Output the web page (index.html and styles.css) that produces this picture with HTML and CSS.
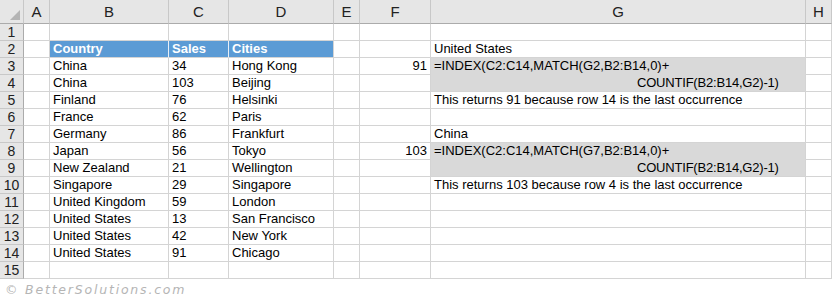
FILE: index.html
```html
<!DOCTYPE html>
<html>
<head>
<meta charset="utf-8">
<link rel="stylesheet" href="styles.css">
</head>
<body>
<div class="sheet">
  <div class="hd corner"><span class="tri"></span></div>
  <div class="hd col">A</div><div class="hd col">B</div><div class="hd col">C</div><div class="hd col">D</div><div class="hd col">E</div><div class="hd col">F</div><div class="hd col">G</div><div class="hd col">H</div>

  <div class="hd row">1</div><div class="c"></div><div class="c"></div><div class="c"></div><div class="c"></div><div class="c"></div><div class="c"></div><div class="c"></div><div class="c"></div>

  <div class="hd row">2</div><div class="c"></div><div class="c th">Country</div><div class="c th">Sales</div><div class="c th last">Cities</div><div class="c"></div><div class="c"></div><div class="c">United States</div><div class="c"></div>

  <div class="hd row">3</div><div class="c"></div><div class="c">China</div><div class="c">34</div><div class="c">Hong Kong</div><div class="c"></div><div class="c num">91</div><div class="c grey top">=INDEX(C2:C14,MATCH(G2,B2:B14,0)+</div><div class="c"></div>

  <div class="hd row">4</div><div class="c"></div><div class="c">China</div><div class="c">103</div><div class="c">Beijing</div><div class="c"></div><div class="c"></div><div class="c grey"><span class="cont">COUNTIF(B2:B14,G2)-1)</span></div><div class="c"></div>

  <div class="hd row">5</div><div class="c"></div><div class="c">Finland</div><div class="c">76</div><div class="c">Helsinki</div><div class="c"></div><div class="c"></div><div class="c">This returns 91 because row 14 is the last occurrence</div><div class="c"></div>

  <div class="hd row">6</div><div class="c"></div><div class="c">France</div><div class="c">62</div><div class="c">Paris</div><div class="c"></div><div class="c"></div><div class="c"></div><div class="c"></div>

  <div class="hd row">7</div><div class="c"></div><div class="c">Germany</div><div class="c">86</div><div class="c">Frankfurt</div><div class="c"></div><div class="c"></div><div class="c">China</div><div class="c"></div>

  <div class="hd row">8</div><div class="c"></div><div class="c">Japan</div><div class="c">56</div><div class="c">Tokyo</div><div class="c"></div><div class="c num">103</div><div class="c grey top">=INDEX(C2:C14,MATCH(G7,B2:B14,0)+</div><div class="c"></div>

  <div class="hd row">9</div><div class="c"></div><div class="c">New Zealand</div><div class="c">21</div><div class="c">Wellington</div><div class="c"></div><div class="c"></div><div class="c grey"><span class="cont">COUNTIF(B2:B14,G2)-1)</span></div><div class="c"></div>

  <div class="hd row">10</div><div class="c"></div><div class="c">Singapore</div><div class="c">29</div><div class="c">Singapore</div><div class="c"></div><div class="c"></div><div class="c">This returns 103 because row 4 is the last occurrence</div><div class="c"></div>

  <div class="hd row">11</div><div class="c"></div><div class="c">United Kingdom</div><div class="c">59</div><div class="c">London</div><div class="c"></div><div class="c"></div><div class="c"></div><div class="c"></div>

  <div class="hd row">12</div><div class="c"></div><div class="c">United States</div><div class="c">13</div><div class="c">San Francisco</div><div class="c"></div><div class="c"></div><div class="c"></div><div class="c"></div>

  <div class="hd row">13</div><div class="c"></div><div class="c">United States</div><div class="c">42</div><div class="c">New York</div><div class="c"></div><div class="c"></div><div class="c"></div><div class="c"></div>

  <div class="hd row">14</div><div class="c"></div><div class="c">United States</div><div class="c">91</div><div class="c">Chicago</div><div class="c"></div><div class="c"></div><div class="c"></div><div class="c"></div>

  <div class="hd row">15</div><div class="c"></div><div class="c"></div><div class="c"></div><div class="c"></div><div class="c"></div><div class="c"></div><div class="c"></div><div class="c"></div>
</div>
<div class="mark">© BetterSolutions.com</div>
</body>
</html>
```
FILE: styles.css
```css
html, body {
  margin: 0;
  padding: 0;
  background: #ffffff;
}
body {
  width: 832px;
  height: 300px;
  overflow: hidden;
  font-family: "Liberation Sans", Arial, sans-serif;
  font-size: 13px;
  color: #000;
}
.sheet {
  display: grid;
  grid-template-columns: 24px 26px 119px 60px 105px 26px 71px 375px 26px;
  grid-template-rows: 24px repeat(15, 17px);
}
.sheet > div {
  box-sizing: border-box;
  border-right: 1px solid #d4d4d4;
  border-bottom: 1px solid #d4d4d4;
  white-space: nowrap;
  line-height: 16px;
}
.hd {
  background: #e6e6e6;
  text-align: center;
  color: #222;
  font-size: 14px;
}
.hd.col {
  border-bottom: 1px solid #ababab;
  border-right: 1px solid #c8c8c8;
  line-height: 23px;
  font-size: 15px;
}
.hd.corner {
  border-bottom: 1px solid #ababab;
  border-right: 1px solid #c8c8c8;
  position: relative;
}
.tri {
  position: absolute;
  right: 3px;
  bottom: 3px;
  width: 0;
  height: 0;
  border-left: 10px solid transparent;
  border-bottom: 10px solid #b4b4b4;
}
.hd.row {
  border-right: 1px solid #ababab;
  border-bottom: 1px solid #c8c8c8;
}
.c {
  padding: 0 3px;
}
.th {
  background: #5b9bd5;
  color: #fff;
  font-weight: bold;
  border-right-color: #e8eff8 !important;
}
.th.last {
  border-right-color: #d4d4d4 !important;
}
.num {
  text-align: right;
}
.grey {
  background: #d9d9d9;
}
.grey.top {
  border-bottom-color: #d9d9d9 !important;
}
.cont {
  padding-left: 203px;
  letter-spacing: -0.2px;
}
.mark {
  padding: 3px 0 0 5px;
  font-family: "DejaVu Sans", sans-serif;
  font-style: italic;
  font-size: 12.5px;
  letter-spacing: 1.8px;
  color: #b5b5b5;
}
```
